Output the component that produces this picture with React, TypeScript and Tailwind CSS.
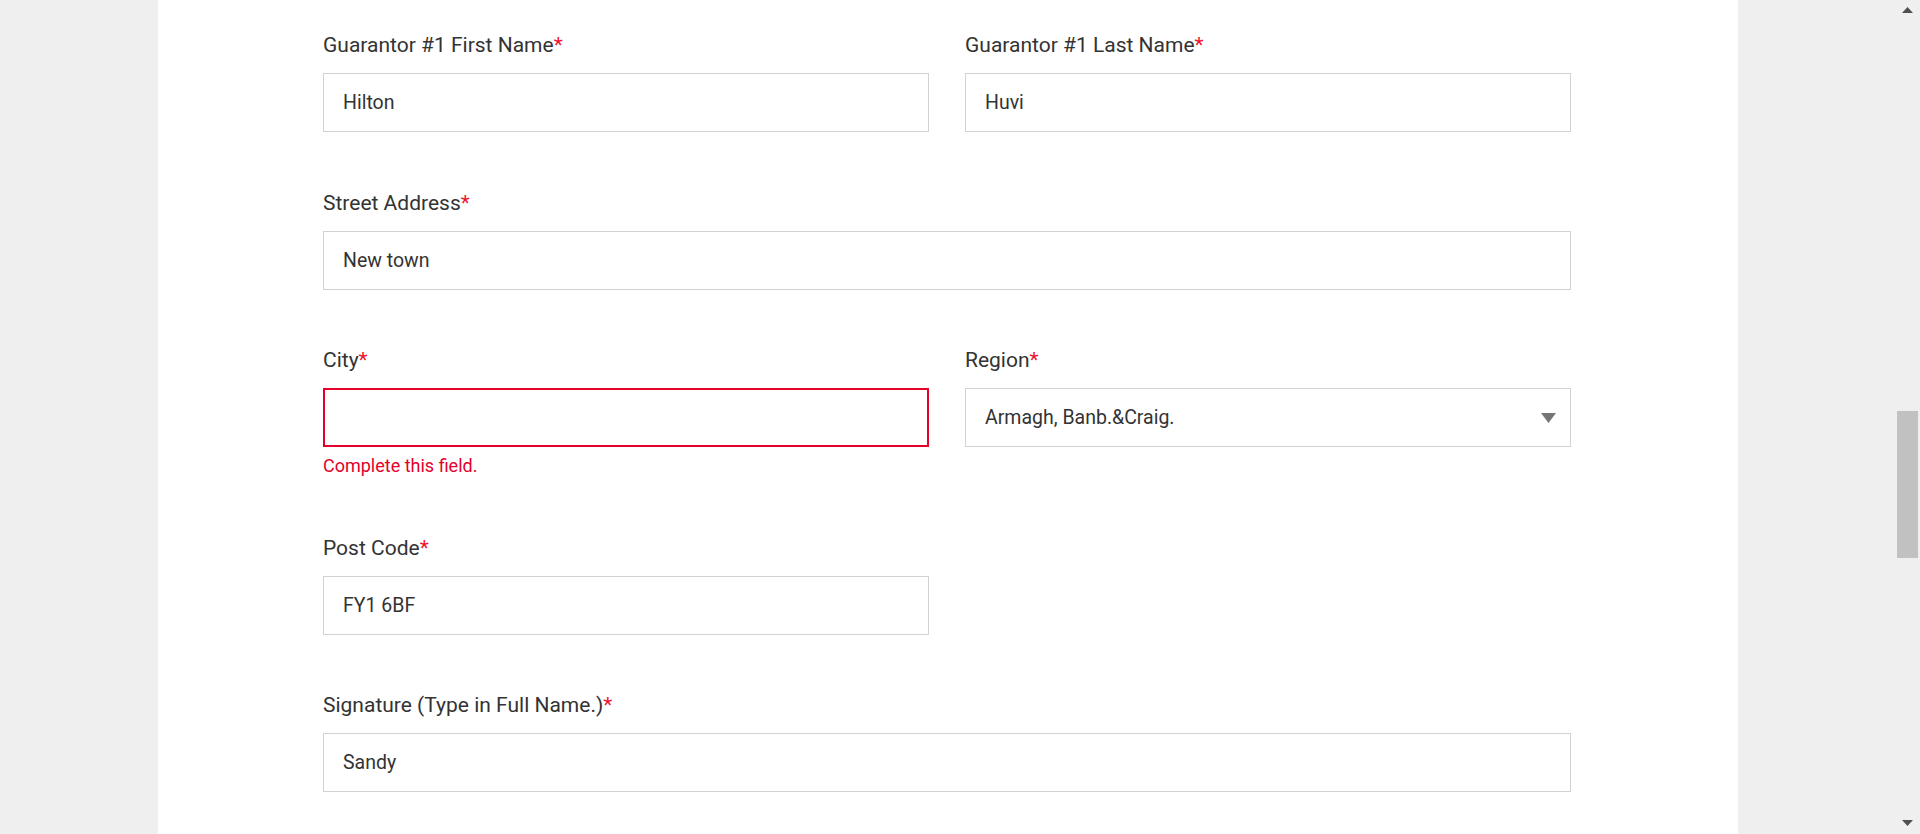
import React from 'react';

type FieldProps = {
  label: string;
  value?: string;
  error?: string;
  select?: boolean;
};

const Field = ({ label, value = '', error, select }: FieldProps) => (
  <div className="mb-[56.5px]">
    <label className="block h-[29px] leading-[29px] mb-[13px] text-[21px] text-[#333333]">
      {label}
      <span className="text-[#f0142d]">*</span>
    </label>
    <div
      className={
        error
          ? 'relative h-[59px] border-[2.5px] border-[#e4002b] bg-white'
          : 'relative h-[59px] border border-[#d2d2d2] bg-white'
      }
    >
      <input
        readOnly
        value={value}
        className="w-full h-full pl-[19px] pr-12 text-[19.5px] text-[#333333] bg-transparent outline-none"
      />
      {select && (
        <svg
          className="absolute right-[14px] top-[24px]"
          width="15"
          height="10"
          viewBox="0 0 15 10"
        >
          <path d="M0 0 H15 L7.5 10 Z" fill="#757575" />
        </svg>
      )}
    </div>
    {error && (
      <div className="mt-[7px] h-[23px] leading-[23px] text-[18px] text-[#e4002b]">{error}</div>
    )}
  </div>
);

const Scrollbar = () => (
  <div className="relative w-[25px] h-full bg-[#efefef]">
    <svg className="absolute left-[7px] top-[7px]" width="11" height="6" viewBox="0 0 11 6">
      <path d="M0 6 L5.5 0 L11 6 Z" fill="#505050" />
    </svg>
    <div className="absolute left-[2px] right-[2px] top-[411px] h-[147px] bg-[#c1c1c1]" />
    <svg className="absolute left-[7px] bottom-[8px]" width="11" height="6" viewBox="0 0 11 6">
      <path d="M0 0 L11 0 L5.5 6 Z" fill="#505050" />
    </svg>
  </div>
);

export default function App() {
  return (
    <div
      className="flex h-[834px] overflow-hidden bg-[#efefef]"
      style={{ fontFamily: 'Roboto, "Noto Sans", sans-serif' }}
    >
      <div className="w-[158px] shrink-0" />
      <div className="w-[1580px] shrink-0 bg-white pl-[165px] pr-[167px] pt-[31px]">
        <div className="grid grid-cols-2 gap-x-[36px]">
          <Field label="Guarantor #1 First Name" value="Hilton" />
          <Field label="Guarantor #1 Last Name" value="Huvi" />
        </div>
        <Field label="Street Address" value="New town" />
        <div className="grid grid-cols-2 gap-x-[36px] items-start">
          <Field label="City" error="Complete this field." />
          <Field label="Region" value="Armagh, Banb.&Craig." select />
        </div>
        <div className="grid grid-cols-2 gap-x-[36px]">
          <Field label="Post Code" value="FY1 6BF" />
        </div>
        <Field label="Signature (Type in Full Name.)" value="Sandy" />
      </div>
      <div className="flex-1" />
      <Scrollbar />
    </div>
  );
}
